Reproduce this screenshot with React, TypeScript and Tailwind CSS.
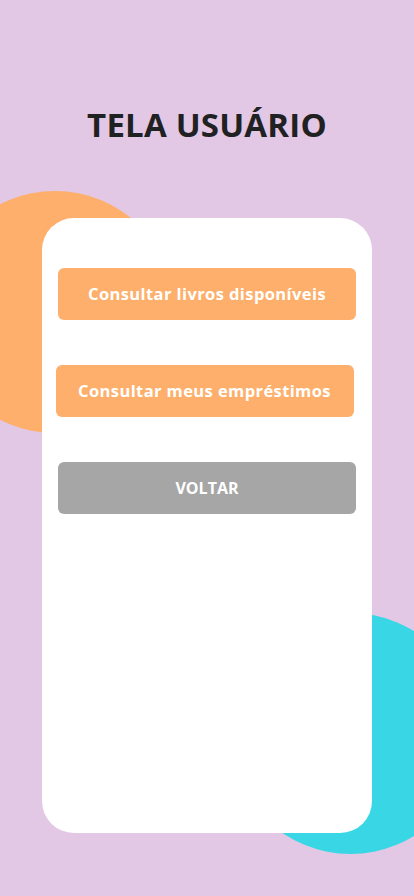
export default function App() {
  return (
    <div
      className="relative w-[414px] h-[896px] overflow-hidden bg-[#e2c8e4]"
      style={{ fontFamily: '"Open Sans", "Liberation Sans", sans-serif' }}
    >
      {/* decorative circles */}
      <div className="absolute left-[-66px] top-[191px] w-[242px] h-[242px] rounded-full bg-[#fdaf6b]" />
      <div className="absolute left-[230px] top-[613px] w-[241px] h-[241px] rounded-full bg-[#39d7e6]" />

      <div className="relative flex flex-col items-center">
        <h1 className="mt-[101px] h-[48px] leading-[48px] text-[33px] font-bold text-[#1f2123] tracking-[0.2px]">
          TELA USUÁRIO
        </h1>

        <div className="mt-[69px] w-[330px] h-[615px] rounded-[32px] bg-white flex flex-col pt-[50px]">
          <button className="ml-[16px] w-[298px] h-[52px] rounded-[6px] bg-[#fdaf6b] text-white text-[16.5px] font-bold tracking-[0.4px]">
            Consultar livros disponíveis
          </button>
          <button className="mt-[45px] ml-[13.5px] w-[298px] h-[52px] rounded-[6px] bg-[#fdaf6b] text-white text-[16.5px] font-bold tracking-[0.4px]">
            Consultar meus empréstimos
          </button>
          <button className="mt-[45px] ml-[16px] w-[298px] h-[52px] rounded-[6px] bg-[#a6a6a6] text-white text-[16px] font-bold">
            VOLTAR
          </button>
        </div>
      </div>
    </div>
  );
}
